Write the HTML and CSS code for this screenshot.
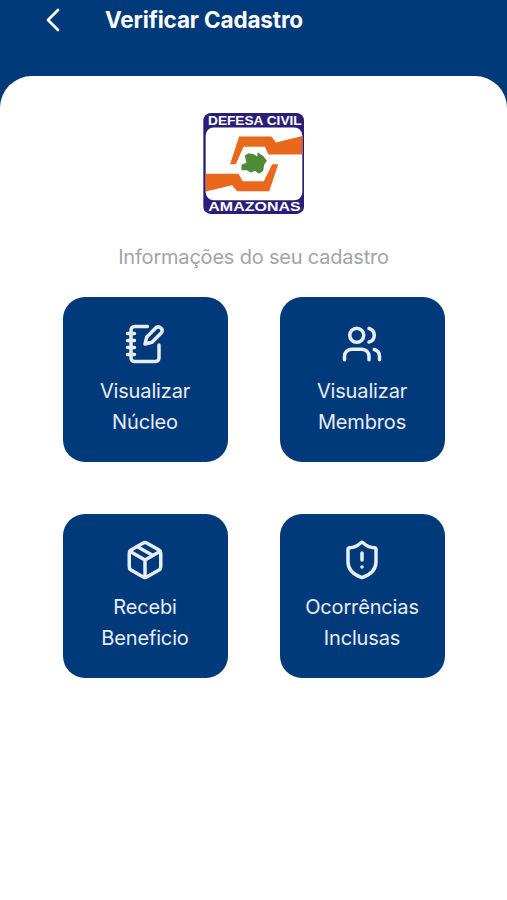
FILE: index.html
```html
<!DOCTYPE html>
<html lang="pt-BR">
<head>
    <meta charset="UTF-8">
    <meta name="viewport" content="width=device-width, initial-scale=1.0">
    <title>Verificar Cadastro</title>
    <link rel="stylesheet" href="styles.css">
</head>
<body>
    <header class="header">
        <button class="back" aria-label="Voltar">
            <svg width="16" height="24" viewBox="0 0 16 24">
                <path d="M13 2L3 12l10 10"/>
            </svg>
        </button>
        <h1>Verificar Cadastro</h1>
    </header>

    <main class="content">
        <svg class="logo" viewBox="28 27 302 302">
            <rect x="29" y="27" width="301" height="302" rx="22" fill="#2a1e78"/>
            <rect x="36" y="70" width="289" height="218" rx="24" fill="#fff"/>
            <path d="M109 180L136 97H233L246 115L325 96V151H224L213 128H149L126 180Z" fill="#e9681c"/>
            <path d="M36 209H134L147 231H210L235 180H253L226 261H130L115 243L36 262Z" fill="#e9681c"/>
            <path d="M153 155L164 147L180 150L190 157L191 144L201 151L210 158L219 170L211 182L208 200L195 209L184 200L170 205L159 198H143V182L158 176Z" fill="#4f8a34"/>
            <text x="183" y="63" textLength="280" lengthAdjust="spacingAndGlyphs">DEFESA CIVIL</text>
            <text x="182" y="321" textLength="276" lengthAdjust="spacingAndGlyphs">AMAZONAS</text>
        </svg>

        <p class="subtitle">Informações do seu cadastro</p>

        <div class="grid">
            <a class="card">
                <svg class="icon" viewBox="0 0 24 24">
                    <path d="M13.4 2H6a2 2 0 0 0-2 2v16a2 2 0 0 0 2 2h12a2 2 0 0 0 2-2v-7.4"/>
                    <path d="M2 6h4M2 10h4M2 14h4M2 18h4"/>
                    <path d="M18.4 2.6a2.17 2.17 0 0 1 3 3L16 11l-4 1 1-4Z"/>
                </svg>
                <span>Visualizar<br>Núcleo</span>
            </a>
            <a class="card">
                <svg class="icon" viewBox="0 0 24 24">
                    <path d="M16 21v-2a4 4 0 0 0-4-4H6a4 4 0 0 0-4 4v2"/>
                    <circle cx="9" cy="7" r="4"/>
                    <path d="M22 21v-2a4 4 0 0 0-3-3.87"/>
                    <path d="M16 3.13a4 4 0 0 1 0 7.75"/>
                </svg>
                <span>Visualizar<br>Membros</span>
            </a>
            <a class="card">
                <svg class="icon" viewBox="0 0 24 24">
                    <path d="M7.5 4.27l9 5.15"/>
                    <path d="M21 8a2 2 0 0 0-1-1.73l-7-4a2 2 0 0 0-2 0l-7 4A2 2 0 0 0 3 8v8a2 2 0 0 0 1 1.73l7 4a2 2 0 0 0 2 0l7-4A2 2 0 0 0 21 16Z"/>
                    <path d="M3.3 7l8.7 5 8.7-5"/>
                    <path d="M12 22V12"/>
                </svg>
                <span>Recebi<br>Beneficio</span>
            </a>
            <a class="card">
                <svg class="icon" viewBox="0 0 24 24">
                    <path d="M20 13c0 5-3.5 7.5-7.66 8.95a1 1 0 0 1-.67-.01C7.5 20.5 4 18 4 13V6a1 1 0 0 1 1-1c2 0 4.5-1.2 6.24-2.72a1.17 1.17 0 0 1 1.52 0C14.51 3.81 17 5 19 5a1 1 0 0 1 1 1z"/>
                    <path d="M12 8v4M12 16h.01"/>
                </svg>
                <span>Ocorrências<br>Inclusas</span>
            </a>
        </div>
    </main>
</body>
</html>
```
FILE: styles.css
```css
* {
    box-sizing: border-box;
}
body {
    margin: 0;
    height: 100vh;
    display: flex;
    flex-direction: column;
    background-color: #003a7a;
    font-family: Inter, "Liberation Sans", sans-serif;
    overflow: hidden;
}
.header {
    display: flex;
    align-items: center;
    height: 76px;
    padding: 0 45px 36px;
}
.back {
    display: flex;
    width: 16px;
    margin-right: 44px;
    padding: 0;
    border: none;
    background: none;
}
.back svg {
    fill: none;
    stroke: #fff;
    stroke-width: 2.8;
    stroke-linecap: round;
    stroke-linejoin: round;
}
h1 {
    margin: 0;
    color: #fff;
    font-size: 22.5px;
    font-weight: 700;
    letter-spacing: -0.15px;
    line-height: 28px;
    white-space: nowrap;
}
.content {
    flex: 1;
    display: flex;
    flex-direction: column;
    align-items: center;
    padding-top: 37px;
    background-color: #fff;
    border-radius: 32px 32px 0 0;
}
.logo {
    width: 101px;
    height: 101px;
}
.logo text {
    fill: #fff;
    font-family: "Liberation Sans", sans-serif;
    font-size: 39px;
    font-weight: bold;
    text-anchor: middle;
}
.subtitle {
    margin: 29px 0 26px;
    color: #a3a3a8;
    font-size: 20px;
    letter-spacing: -0.2px;
    line-height: 28px;
}
.grid {
    display: grid;
    grid-template-columns: repeat(2, 165px);
    gap: 52px;
}
.card {
    display: flex;
    flex-direction: column;
    align-items: center;
    height: 164.5px;
    padding-top: 25.5px;
    border-radius: 22px;
    background-color: #003a7a;
    color: #e8edf8;
    font-size: 20px;
    letter-spacing: -0.15px;
    line-height: 31px;
    text-align: center;
}
.icon {
    width: 42px;
    height: 42px;
    margin-bottom: 11px;
    fill: none;
    stroke: #e8edf8;
    stroke-width: 2;
    stroke-linecap: round;
    stroke-linejoin: round;
}
```
